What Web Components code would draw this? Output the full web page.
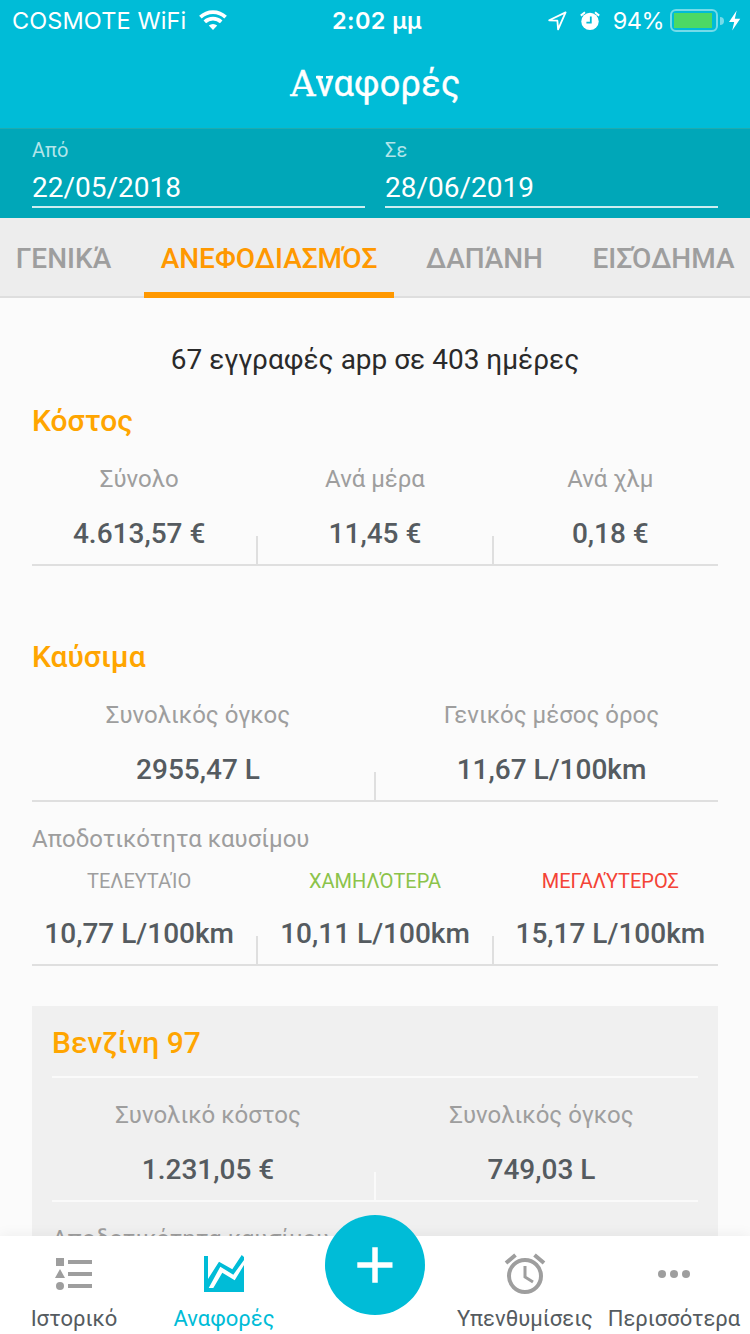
<!DOCTYPE html>
<html lang="el">
<head>
<meta charset="utf-8">
<title>Αναφορές</title>
<style>
html,body{margin:0;padding:0;height:100%;overflow:hidden}
body{font-family:Roboto,"Liberation Sans",sans-serif;font-size:24px;background:#fbfbfb}
</style>
</head>
<body>
<report-app></report-app>
<script>
const define = (name, html) => customElements.define(name, class extends HTMLElement {
  constructor() {
    super();
    const t = document.createElement('template');
    t.innerHTML = html;
    this.attachShadow({mode: 'open'}).append(t.content.cloneNode(true));
  }
});

define('status-bar', `
<style>
:host{display:grid;grid-template-columns:320px auto 1fr;align-items:center;box-sizing:border-box;height:41px;padding:1px 8px 0 12px;color:#fff;font:400 23.5px/40px Inter,Roboto,sans-serif;white-space:nowrap}
svg{display:block;flex:none}
.l,.r{display:flex;align-items:center}
.r{justify-content:flex-end}
.l svg{margin-left:13px;margin-top:-2px}
.net{letter-spacing:.1px}
.time{font-weight:600;letter-spacing:.4px}
.pct{margin:0 6px 0 13px;letter-spacing:-.5px}
</style>
<div class="l"><span class="net">COSMOTE WiFi</span>
<svg width="28" height="20" viewBox="0 0 28 20" fill="none" stroke="#fff" stroke-width="3.7"><path d="M1.4 7.1a18.2 18.2 0 0 1 25.2 0"/><path d="M5.8 11.8a12 12 0 0 1 16.4 0"/><path d="M14 20l-4.2-4.4a6.3 6.3 0 0 1 8.4 0z" fill="#fff" stroke="none"/></svg></div>
<span class="time">2:02 μμ</span>
<div class="r">
<svg width="19" height="20" viewBox="0 0 19 20" fill="none" stroke="#fff" stroke-width="1.8" stroke-linejoin="round"><path d="M1.2 9.3L17.6 1.4 10.1 18.4 9.4 9.7z"/></svg>
<svg style="margin-left:13px" width="20" height="20" viewBox="0 0 20 20"><circle cx="10" cy="10.4" r="8.7" fill="#fff"/><path d="M.8 4.6L5 1.2M19.2 4.6L15 1.2" stroke="#fff" stroke-width="2"/><path d="M10.8 5.4v6.3H6.4" fill="none" stroke="#00bcd7" stroke-width="1.8"/></svg>
<span class="pct">94%</span>
<svg width="72" height="24" viewBox="0 0 72 24"><rect x="1" y="1" width="46" height="21" rx="5" fill="none" stroke="#75dbe9" stroke-width="2"/><rect x="4" y="4" width="38" height="15" fill="#4cd964"/><path d="M50 8a4 4 0 0 1 0 8z" fill="#75dbe9"/><path d="M66.7 1.5L59 13h5.2l-2 8.5L70.2 9.8h-5.4z" fill="#fff"/></svg>
</div>`);

define('page-title', `
<style>:host{display:flex;justify-content:center;align-items:center;height:86px;color:#fff;font:36px/86px Roboto,sans-serif;white-space:nowrap;letter-spacing:.3px;padding-left:1px}</style>
<span><slot></slot></span>`);

define('date-field', `
<style>
:host{display:block;flex:1;box-sizing:border-box;border-bottom:2px solid #cceef1;color:#fff;height:70px}
.k{font-size:20px;line-height:24px;color:#b2e5ea}
.v{font-size:28px;line-height:36px;padding-top:8px}
</style>
<div class="k"><slot name="label"></slot></div><div class="v"><slot></slot></div>`);

define('date-range', `
<style>:host{display:flex;gap:20px;align-items:flex-start;box-sizing:border-box;height:90px;padding:9px 32px 0;background:#00a7b8;border-top:1px solid #20abae}</style>
<slot></slot>`);

define('tab-strip', `
<style>:host{display:flex;height:80px;background:#ededed;box-shadow:inset 0 -2px #dedede}</style>
<slot></slot>`);

define('tab-item', `
<style>
:host{display:flex;box-sizing:border-box;height:80px;justify-content:center;color:#9e9e9e;font-weight:500;font-size:28px;line-height:82px;white-space:nowrap}
:host([active]){color:#ff9800;box-shadow:inset 0 -6px #ff9800}
</style><slot></slot>`);

define('section-title', `
<style>:host{display:block;font-weight:500;font-size:30px;line-height:40px;color:#ffa500}</style><slot></slot>`);

define('stat-row', `
<style>:host{display:flex;gap:20px;box-sizing:border-box;height:103px;border-bottom:2px solid var(--rule,#dfdfdf)}
:host([compact]){height:99px}</style>
<slot></slot>`);

define('stat-cell', `
<style>
:host{display:block;flex:1 1 0;min-width:0;text-align:center;position:relative;white-space:nowrap}
.k{font-size:24px;line-height:32px;color:#9e9e9e}
.v{font-size:28px;line-height:36px;font-weight:500;color:#555b60;margin-top:21px}
:host([small]) .k{font-size:20px;line-height:28px;color:var(--tone,#9e9e9e)}
:host(:first-child) .k,:host(:first-child) .v{margin-left:-1px}
:host(:not(:first-child))::before{content:"";position:absolute;left:-11px;bottom:0;width:2px;height:28px;background:var(--rule,#dfdfdf)}
</style>
<div class="k"><slot name="label"></slot></div><div class="v"><slot></slot></div>`);

define('fuel-card', `
<style>
:host{display:block;background:#f0f0f0;padding:0 20px;height:300px;margin-top:40px;--rule:#fafafa}
.h{padding:17px 0 13px;border-bottom:2px solid #fafafa;margin-bottom:21px}
</style>
<div class="h"><slot name="title"></slot></div><slot></slot>`);

define('sub-label', `
<style>:host{display:block;font-size:24px;line-height:32px;color:#9e9e9e}</style><slot></slot>`);

define('nav-item', `
<style>
:host{display:flex;flex-direction:column;align-items:center;min-width:0;color:#555b60;white-space:nowrap;--icon:#9e9e9e}
:host([active]){color:#00bcd7;--icon:#00bcd7}
.i{height:44px;padding-top:16px;color:var(--icon)}
.t{font-size:22px;line-height:28px;padding-top:9px}
</style>
<div class="i"><slot name="icon"></slot></div><div class="t"><slot></slot></div>`);

define('bottom-nav', `
<style>
:host{display:grid;grid-template-columns:148px 152px 150px 150px 148px;height:98px;background:#fff;box-shadow:0 -2px 12px rgba(0,0,0,.05);position:absolute;left:0;right:0;bottom:0}
svg{display:block}
.fab{position:absolute;left:325px;top:-21px;width:100px;height:100px;border-radius:50%;background:#00bcd7}
</style>
<nav-item><svg slot="icon" width="44" height="44" fill="currentColor"><path d="M4 6h8v8H4zM3 26l5-9 5 9zM16 8h24v4H16zM16 20h24v4H16zM16 32h24v4H16z"/><circle cx="8" cy="34" r="4"/></svg>Ιστορικό</nav-item>
<nav-item active><svg slot="icon" width="44" height="44"><path d="M2 4h4v23L17 9.700l13.300 7.600L39.700 3 42 5v35H2z" fill="#00bcd7"/><path d="M6.700 36L18.300 14.700l13 8L42 8v5l-9.300 15.300-12.400-7.600-9 15.300z" fill="#fff"/></svg>Αναφορές</nav-item>
<span></span>
<nav-item><svg slot="icon" width="44" height="44" fill="none" stroke="currentColor" stroke-width="4"><circle cx="22" cy="24" r="16"/><path d="M22 14v11l8 5" stroke-width="3"/><path d="M3 11l9.500-8M41 11l-9.500-8"/></svg>Υπενθυμίσεις</nav-item>
<nav-item><svg slot="icon" width="44" height="44" fill="currentColor"><circle cx="10" cy="22" r="4"/><circle cx="22" cy="22" r="4"/><circle cx="34" cy="22" r="4"/></svg>Περισσότερα</nav-item>
<svg class="fab" viewBox="0 0 100 100"><path d="M32.300 50h35.200M50 32.300v35.400" stroke="#fff" stroke-width="5.500"/></svg>`);

define('report-app', `
<style>
:host{display:flex;flex-direction:column;position:relative;width:750px;height:1334px;overflow:hidden;background:#fbfbfb}
header{background:#00bcd7;height:128px}
main{padding:44px 32px 0;flex:1;min-height:0;overflow:hidden}
.sum{font-size:28px;line-height:36px;color:#2a2a2a;text-align:center;margin-bottom:23px}
.g1{margin-top:22px}
.g2{margin-top:71px}
page-title{-webkit-text-stroke:.4px #fff}
.slab{font-family:"DejaVu Serif",serif;font-size:35px}
/* short slab serifs on the two arms of the nu */
.nu{background:linear-gradient(#fff,#fff) 0 13px/7px 2.500px no-repeat,linear-gradient(#fff,#fff) 100% 13px/7px 2.500px no-repeat}
</style>
<header><status-bar></status-bar><page-title><span class="slab">Α</span><span class="nu">ν</span>αφορές</page-title></header>
<date-range><date-field><span slot="label">Από</span>22/05/2018</date-field><date-field><span slot="label">Σε</span>28/06/2019</date-field></date-range>
<tab-strip><tab-item style="width:144px;padding-right:17px">ΓΕΝΙΚΆ</tab-item><tab-item active style="width:250px">ΑΝΕΦΟΔΙΑΣΜΌΣ</tab-item><tab-item style="width:181px">ΔΑΠΆΝΗ</tab-item><tab-item style="width:175px;padding-left:2px">ΕΙΣΌΔΗΜΑ</tab-item></tab-strip>
<main>
<div class="sum">67 εγγραφές app σε 403 ημέρες</div>
<section-title>Κόστος</section-title>
<stat-row class="g1"><stat-cell><span slot="label">Σύνολο</span>4.613,57 €</stat-cell><stat-cell><span slot="label">Ανά μέρα</span>11,45 €</stat-cell><stat-cell><span slot="label">Ανά χλμ</span>0,18 €</stat-cell></stat-row>
<section-title class="g2">Καύσιμα</section-title>
<stat-row class="g1"><stat-cell><span slot="label">Συνολικός όγκος</span>2955,47 L</stat-cell><stat-cell><span slot="label">Γενικός μέσος όρος</span>11,67 L/100km</stat-cell></stat-row>
<sub-label style="margin-top:21px">Αποδοτικότητα καυσίμου</sub-label>
<stat-row compact style="margin-top:12px"><stat-cell small><span slot="label">ΤΕΛΕΥΤΑΊΟ</span>10,77 L/100km</stat-cell><stat-cell small style="--tone:#8bc34a"><span slot="label">ΧΑΜΗΛΌΤΕΡΑ</span>10,11 L/100km</stat-cell><stat-cell small style="--tone:#f44336"><span slot="label">ΜΕΓΑΛΎΤΕΡΟΣ</span>15,17 L/100km</stat-cell></stat-row>
<fuel-card><section-title slot="title">Βενζίνη 97</section-title>
<stat-row><stat-cell><span slot="label">Συνολικό κόστος</span>1.231,05 €</stat-cell><stat-cell><span slot="label">Συνολικός όγκος</span>749,03 L</stat-cell></stat-row>
<sub-label style="margin-top:21px">Αποδοτικότητα καυσίμου</sub-label></fuel-card>
</main>
<bottom-nav></bottom-nav>`);
</script>
</body>
</html>
